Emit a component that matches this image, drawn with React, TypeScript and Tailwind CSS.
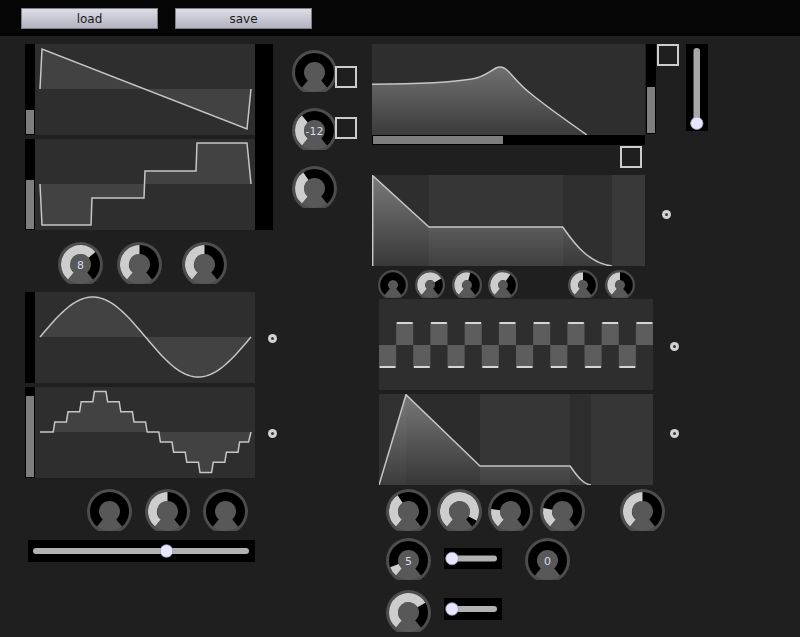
import React from "react";

const arc = (cx: number, cy: number, r: number, a1: number, a2: number) => {
  const p = (a: number) => [cx + r * Math.sin((a * Math.PI) / 180), cy - r * Math.cos((a * Math.PI) / 180)];
  const [x1, y1] = p(a1);
  const [x2, y2] = p(a2);
  const large = a2 - a1 > 180 ? 1 : 0;
  return `M${x1.toFixed(2)} ${y1.toFixed(2)} A${r} ${r} 0 ${large} 1 ${x2.toFixed(2)} ${y2.toFixed(2)}`;
};

function Knob({ size = 45, v = -140, label }: { size?: number; v?: number; label?: string }) {
  const big = size >= 40;
  const R = size / 2;
  const cx = R;
  const cy = R;
  const inner = big ? 10.5 : 5;
  const rimIn = big ? 19.5 : 12.8;
  const tr = (inner + rimIn) / 2;
  const tw = rimIn - inner;
  const h = Math.round(cy + R * 0.87);
  return (
    <svg width={size} height={h} className="block shrink-0">
      <circle cx={cx} cy={cy} r={R} fill="#4d4d4d" />
      <circle cx={cx} cy={cy} r={rimIn} fill="#585858" />
      <path d={arc(cx, cy, tr, -140, 140)} stroke="#000" strokeWidth={tw} fill="none" />
      {v > -140 && <path d={arc(cx, cy, tr, -140, v)} stroke="#cdcdcd" strokeWidth={tw} fill="none" />}
      {label && (
        <text x={cx} y={cy + 4} textAnchor="middle" fontSize={11} fill="#d2dbee" fontFamily="DejaVu Sans, sans-serif">
          {label}
        </text>
      )}
    </svg>
  );
}

function Checkbox({ className = "" }: { className?: string }) {
  return <div className={`w-[22px] h-[22px] border-2 border-[#cccccc] shrink-0 ${className}`} />;
}

function Dot({ className = "" }: { className?: string }) {
  return (
    <div className={`w-[9px] h-[9px] rounded-full bg-[#d2d2d2] flex items-center justify-center shrink-0 ${className}`}>
      <div className="w-[3px] h-[3px] rounded-full bg-[#3a3a3a]" />
    </div>
  );
}

function VBar({ h, fill = 0 }: { h: number; fill?: number }) {
  return (
    <div className="w-[10px] bg-black flex flex-col justify-end p-[1px] shrink-0" style={{ height: h }}>
      {fill > 0 && <div className="w-full bg-[#7e7e7e]" style={{ height: fill }} />}
    </div>
  );
}

const LINE = "#c6c6c6";

function SawGraph() {
  return (
    <svg width={220} height={91} className="block">
      <rect width={220} height={91} fill="#2e2e2e" />
      <path d="M5,45 L7,5 L212,85 L216,45 Z" fill="#424242" />
      <path d="M5,45 L7,5 L212,85 L216,45" stroke={LINE} strokeWidth={1.5} fill="none" />
    </svg>
  );
}

function StepUpGraph() {
  const d = "M5,45 L7,86 L56,86 L57,59 L109,59 L110,32 L161,32 L162,4 L212,4 L216,45";
  return (
    <svg width={220} height={91} className="block">
      <rect width={220} height={91} fill="#2e2e2e" />
      <path d={d + " Z"} fill="#424242" />
      <path d={d} stroke={LINE} strokeWidth={1.5} fill="none" />
    </svg>
  );
}

function SineGraph() {
  const pts: string[] = [];
  for (let i = 0; i <= 120; i++) {
    const x = 5 + (211 * i) / 120;
    const y = 45 - 40 * Math.sin((2 * Math.PI * i) / 120);
    pts.push(`${x.toFixed(2)},${y.toFixed(2)}`);
  }
  const d = "M" + pts.join(" L");
  return (
    <svg width={220} height={91} className="block">
      <rect width={220} height={91} fill="#2e2e2e" />
      <path d={d + " Z"} fill="#424242" />
      <path d={d} stroke={LINE} strokeWidth={1.5} fill="none" />
    </svg>
  );
}

function StairGraph() {
  const levels = [0, 1, 2, 3, 4, 3, 2, 1, 0, -1, -2, -3, -4, -3, -2, -1];
  const w = 13.2;
  let d = "M5,45";
  levels.forEach((l, i) => {
    const x0 = 5 + w * i + (i === 0 ? 0 : 1.6);
    const x1 = 5 + w * (i + 1);
    const y = 45 - l * 10.1;
    d += ` L${x0.toFixed(1)},${y.toFixed(1)} L${x1.toFixed(1)},${y.toFixed(1)}`;
  });
  d = d.replace(/L216\.2,(\S+)$/, "L213.5,$1");
  d += " L216,45";
  return (
    <svg width={220} height={91} className="block">
      <rect width={220} height={91} fill="#2e2e2e" />
      <path d={d + " Z"} fill="#424242" />
      <path d={d} stroke={LINE} strokeWidth={1.5} fill="none" />
    </svg>
  );
}

function FilterGraph() {
  const d =
    "M0,40.3 C40,40 80,38.5 100,35 C112,33 118,27 124,24 C128,22 132,23 136,27 C142,33 148,41 158,49 C175,63 195,77 215,91";
  return (
    <svg width={273} height={91} className="block">
      <defs>
        <linearGradient id="gf" x1="0" y1="0" x2="0" y2="1">
          <stop offset="0" stopColor="#fff" stopOpacity="0.32" />
          <stop offset="1" stopColor="#fff" stopOpacity="0.06" />
        </linearGradient>
      </defs>
      <rect width={273} height={91} fill="#2e2e2e" />
      <path d={d + " L0,91 Z"} fill="url(#gf)" />
      <path d={d} stroke={LINE} strokeWidth={1.5} fill="none" />
    </svg>
  );
}

function Env1() {
  const d = "M0.7,91 L0.7,0.7 L57,52 L190.7,52 C200,65 215,88 240,91";
  return (
    <svg width={273} height={91} className="block">
      <defs>
        <linearGradient id="ge1" x1="0" y1="0" x2="0" y2="1">
          <stop offset="0" stopColor="#fff" stopOpacity="0.36" />
          <stop offset="1" stopColor="#fff" stopOpacity="0.05" />
        </linearGradient>
      </defs>
      <rect x={0} width={57} height={91} fill="#2e2e2e" />
      <rect x={57} width={134} height={91} fill="#363636" />
      <rect x={191} width={49} height={91} fill="#2f2f2f" />
      <rect x={240} width={33} height={91} fill="#393939" />
      <path d={d + " L0,91 Z"} fill="url(#ge1)" />
      <path d={d} stroke={LINE} strokeWidth={1.5} fill="none" />
    </svg>
  );
}

function Env2() {
  const d = "M0,91 L27,0.7 L101,72 L191,72 C197,80 203,90 212,91";
  return (
    <svg width={274} height={91} className="block">
      <defs>
        <linearGradient id="ge2" x1="0" y1="0" x2="0" y2="1">
          <stop offset="0" stopColor="#fff" stopOpacity="0.36" />
          <stop offset="1" stopColor="#fff" stopOpacity="0.05" />
        </linearGradient>
      </defs>
      <rect x={0} width={27} height={91} fill="#313131" />
      <rect x={27} width={74} height={91} fill="#2c2c2c" />
      <rect x={101} width={90} height={91} fill="#363636" />
      <rect x={191} width={21} height={91} fill="#2d2d2d" />
      <rect x={212} width={62} height={91} fill="#363636" />
      <path d={d + " L0,91 Z"} fill="url(#ge2)" />
      <path d={d} stroke={LINE} strokeWidth={1.5} fill="none" />
    </svg>
  );
}

function StepSeq() {
  const bw = 274 / 16;
  return (
    <svg width={274} height={91} className="block">
      <rect width={274} height={91} fill="#2e2e2e" />
      {Array.from({ length: 16 }).map((_, i) => {
        const x = i * bw;
        const up = i % 2 === 1;
        return (
          <g key={i}>
            <rect x={x} y={up ? 23 : 46} width={bw} height={23} fill="#5d5d5d" />
            <rect x={x + 0.7} y={up ? 23 : 67} width={bw - 1.4} height={2} fill="#d6d6d6" />
          </g>
        );
      })}
    </svg>
  );
}

function HSlider({ w, h, track, handle }: { w: number; h: number; track: [number, number]; handle: number }) {
  const cy = h / 2;
  return (
    <div className="bg-black shrink-0" style={{ width: w, height: h }}>
      <svg width={w} height={h} className="block">
        <rect x={track[0]} y={cy - 3} width={track[1] - track[0]} height={6} rx={3} fill="#b2b2b2" />
        <circle cx={handle} cy={cy} r={6.3} fill="#e6e6ff" stroke="#9a9aae" strokeWidth={0.8} />
      </svg>
    </div>
  );
}

function VSlider() {
  return (
    <div className="bg-black w-[22px] h-[87px] shrink-0">
      <svg width={22} height={87} className="block">
        <rect x={7.5} y={4} width={6.5} height={76} rx={3.2} fill="#a8a8a8" />
        <circle cx={10.8} cy={79.3} r={6.2} fill="#e6e6ff" stroke="#9a9aae" strokeWidth={0.8} />
      </svg>
    </div>
  );
}

function Button({ children }: { children: React.ReactNode }) {
  return (
    <div className="w-[137px] h-[21px] bg-linear-to-b from-[#dddde8] to-[#b3b3bf] border border-[#80808a] flex items-center justify-center text-[12px] text-[#1b1b1b] leading-none">
      {children}
    </div>
  );
}

export default function App() {
  return (
    <div className="w-[800px] h-[637px] bg-[#1f1f1f] overflow-hidden flex flex-col font-['DejaVu_Sans',sans-serif]">
      <div className="h-[36px] bg-[#050505] flex items-start pt-[8px] pl-[21px] gap-[17px] shrink-0">
        <Button>load</Button>
        <Button>save</Button>
      </div>
      <div className="flex items-start">
        {/* Column A */}
        <div className="ml-[25px] mt-[8px] w-[255px] flex flex-col shrink-0">
          <div className="flex">
            <div className="flex flex-col gap-[4px]">
              <div className="flex">
                <VBar h={91} fill={24} />
                <SawGraph />
              </div>
              <div className="flex">
                <VBar h={91} fill={49} />
                <StepUpGraph />
              </div>
            </div>
            <div className="w-[18px] h-[186px] bg-black" />
          </div>
          <div className="flex mt-[12px] ml-[33px]">
            <Knob v={50} label="8" />
            <div className="ml-[14px]">
              <Knob v={0} />
            </div>
            <div className="ml-[20px]">
              <Knob v={0} />
            </div>
          </div>
          <div className="flex items-start mt-[8px]">
            <VBar h={91} />
            <SineGraph />
            <Dot className="ml-[13px] mt-[42px]" />
          </div>
          <div className="flex items-start mt-[4px]">
            <VBar h={91} fill={81} />
            <StairGraph />
            <Dot className="ml-[13px] mt-[42px]" />
          </div>
          <div className="flex mt-[11px] ml-[62px] gap-[13px]">
            <Knob />
            <Knob v={0} />
            <Knob />
          </div>
          <div className="mt-[9px] ml-[3px]">
            <HSlider w={227} h={22} track={[5, 221]} handle={138.5} />
          </div>
        </div>

        {/* Column B */}
        <div className="ml-[12px] mt-[14px] flex flex-col shrink-0">
          <div className="flex items-start">
            <Knob />
            <Checkbox className="mt-[16px] -ml-[2px]" />
          </div>
          <div className="flex items-start mt-[16px]">
            <Knob v={-40} label="-12" />
            <Checkbox className="mt-[9px] -ml-[2px]" />
          </div>
          <div className="flex items-start mt-[16px]">
            <Knob v={-35} />
          </div>
        </div>

        {/* Column C */}
        <div className="ml-[15px] mt-[8px] flex flex-col shrink-0">
          <div className="flex items-start">
            <div className="flex flex-col w-[273px]">
              <FilterGraph />
              <div className="h-[10px] bg-black flex p-[1px]">
                <div className="w-[130px] h-full bg-[#7e7e7e]" />
              </div>
              <Checkbox className="self-end mr-[3px] mt-[1px]" />
            </div>
            <div className="ml-[1px]">
              <VBar h={90} fill={46} />
            </div>
            <Checkbox className="ml-[1px]" />
            <div className="ml-[7px]">
              <VSlider />
            </div>
          </div>
          <div className="flex items-start mt-[7px]">
            <Env1 />
            <Dot className="ml-[17px] mt-[35px]" />
          </div>
          <div className="flex items-start mt-[4px] ml-[6px]">
            <Knob size={30} />
            <div className="ml-[7px]">
              <Knob size={30} v={60} />
            </div>
            <div className="ml-[7px]">
              <Knob size={30} v={15} />
            </div>
            <div className="ml-[6px]">
              <Knob size={30} v={35} />
            </div>
            <div className="ml-[50px]">
              <Knob size={30} v={0} />
            </div>
            <div className="ml-[7px]">
              <Knob size={30} v={0} />
            </div>
          </div>
          <div className="flex items-start mt-[1px] ml-[7px]">
            <StepSeq />
            <Dot className="ml-[17px] mt-[43px]" />
          </div>
          <div className="flex items-start mt-[4px] ml-[7px]">
            <Env2 />
            <Dot className="ml-[17px] mt-[35px]" />
          </div>
          <div className="flex items-start mt-[4px] ml-[14px]">
            <Knob v={-34} />
            <div className="ml-[6px]">
              <Knob v={118} />
            </div>
            <div className="ml-[6px]">
              <Knob v={-83} />
            </div>
            <div className="ml-[7px]">
              <Knob v={-80} />
            </div>
            <div className="ml-[35px]">
              <Knob v={0} />
            </div>
          </div>
          <div className="flex items-start mt-[7px] ml-[14px]">
            <Knob v={-110} label="5" />
            <div className="ml-[13px] mt-[10px]">
              <HSlider w={58} h={21} track={[3, 53]} handle={8} />
            </div>
            <div className="ml-[23px]">
              <Knob label="0" />
            </div>
          </div>
          <div className="flex items-start mt-[10px] ml-[14px]">
            <Knob v={60} />
            <div className="ml-[13px] mt-[8px]">
              <HSlider w={58} h={22} track={[3, 53]} handle={8} />
            </div>
          </div>
        </div>
      </div>
    </div>
  );
}
